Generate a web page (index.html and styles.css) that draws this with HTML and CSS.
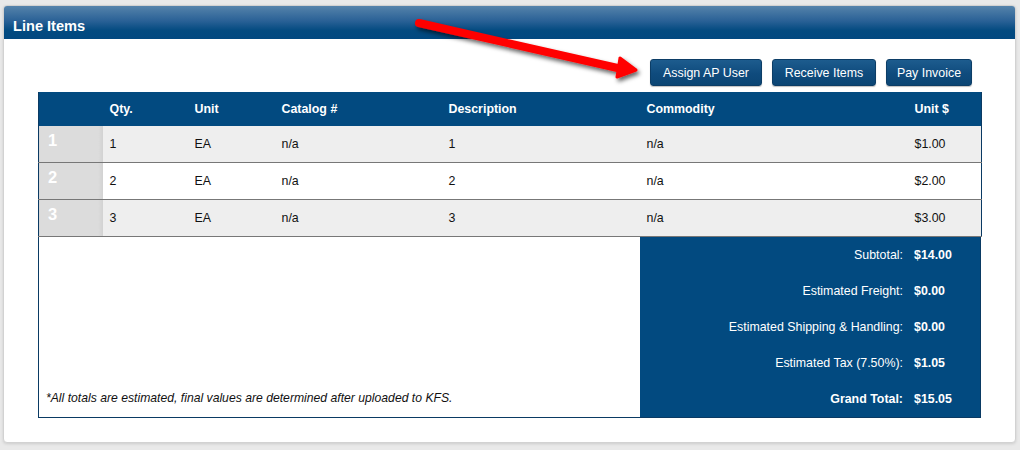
FILE: index.html
```html
<!DOCTYPE html>
<html>
<head>
<meta charset="utf-8">
<link rel="stylesheet" href="styles.css">
</head>
<body>
<div class="panel">
  <div class="panel-head">Line Items</div>
  <div class="panel-body">
    <div class="actions">
      <button class="btn">Assign AP User</button>
      <button class="btn">Receive Items</button>
      <button class="btn">Pay Invoice</button>
    </div>
    <div class="grid-wrap">
      <table class="items">
        <colgroup>
          <col class="c-num"><col class="c-qty"><col class="c-unit"><col class="c-cat"><col class="c-desc"><col class="c-com"><col class="c-price">
        </colgroup>
        <thead>
          <tr><th></th><th>Qty.</th><th>Unit</th><th>Catalog #</th><th>Description</th><th>Commodity</th><th>Unit $</th></tr>
        </thead>
        <tbody>
          <tr class="odd"><td class="num">1</td><td>1</td><td>EA</td><td>n/a</td><td>1</td><td>n/a</td><td>$1.00</td></tr>
          <tr class="even"><td class="num">2</td><td>2</td><td>EA</td><td>n/a</td><td>2</td><td>n/a</td><td>$2.00</td></tr>
          <tr class="odd"><td class="num">3</td><td>3</td><td>EA</td><td>n/a</td><td>3</td><td>n/a</td><td>$3.00</td></tr>
        </tbody>
      </table>
      <div class="totals">
        <div class="note">*All totals are estimated, final values are determined after uploaded to KFS.</div>
        <div class="sums">
          <div class="lbl">Subtotal:</div><div class="val">$14.00</div>
          <div class="lbl">Estimated Freight:</div><div class="val">$0.00</div>
          <div class="lbl">Estimated Shipping &amp; Handling:</div><div class="val">$0.00</div>
          <div class="lbl">Estimated Tax (7.50%):</div><div class="val">$1.05</div>
          <div class="lbl grand">Grand Total:</div><div class="val">$15.05</div>
        </div>
      </div>
    </div>
  </div>
</div>
<svg class="arrow" width="260" height="80" viewBox="0 0 260 80">
  <defs>
    <filter id="sh" x="-20%" y="-50%" width="140%" height="200%">
      <feDropShadow dx="2" dy="3" stdDeviation="2" flood-color="#000" flood-opacity="0.6"/>
    </filter>
  </defs>
  <g filter="url(#sh)">
    <path d="M3 8 L206 54" stroke="#ff0000" stroke-width="8" stroke-linecap="round" fill="none"/>
    <path d="M220 55 L204 43 L201 62 Z" fill="#ff0000" stroke="#ff0000" stroke-width="3" stroke-linejoin="round"/>
  </g>
</svg>
</body>
</html>
```

FILE: styles.css
```css
html, body {
  margin: 0;
  padding: 0;
}
body {
  background: #e9e9e9;
  font-family: "Liberation Sans", Arial, sans-serif;
  font-size: 12.4px;
  color: #111;
  width: 1020px;
  height: 450px;
  position: relative;
  overflow: hidden;
}
.panel {
  margin: 5px 3px 0 3px;
  width: 1013px;
  height: 438px;
  box-sizing: border-box;
  background: #fff;
  border: 1px solid #d2d2d2;
  border-radius: 4px;
  box-shadow: 0 1px 3px rgba(0,0,0,0.12);
  overflow: hidden;
}
.panel-head {
  height: 33px;
  box-sizing: border-box;
  padding: 12px 0 0 9px;
  background: linear-gradient(#5583ab 0%, #2a6196 45%, #024a80 75%, #014880 100%);
  color: #fff;
  font-weight: bold;
  font-size: 14.6px;
  line-height: 16px;
}
.panel-body {
  padding: 20px 34px 0 34px;
}
.actions {
  display: flex;
  justify-content: flex-end;
  gap: 10px;
  padding-right: 9px;
  margin-bottom: 6px;
}
.btn {
  height: 27px;
  padding: 0;
  border: 1px solid #0c3d66;
  border-radius: 3px;
  background: linear-gradient(#1d5c8e, #0f4b7d 55%, #0b4574);
  color: #fff;
  font-family: "Liberation Sans", Arial, sans-serif;
  font-size: 12.4px;
  white-space: nowrap;
  box-shadow: 0 1px 1px rgba(0,0,0,0.25);
}
.btn:nth-child(1) { width: 112px; }
.btn:nth-child(2) { width: 104px; }
.btn:nth-child(3) { width: 86px; }
.grid-wrap {
  width: 943px;
}
.items {
  width: 943px;
  border-collapse: collapse;
  table-layout: fixed;
  border-left: 1px solid #0a3a63;
  border-right: 1px solid #0a3a63;
}
.c-num { width: 64px; }
.c-qty { width: 85px; }
.c-unit { width: 87px; }
.c-cat { width: 167px; }
.c-desc { width: 198px; }
.c-com { width: 268px; }
.c-price { width: 74px; }
.items th {
  background: #024a80;
  color: #fff;
  font-weight: bold;
  text-align: left;
  height: 34px;
  padding: 0 0 0 7px;
  font-size: 12.4px;
}
.items td {
  height: 36px;
  padding: 0 0 0 7px;
  border-bottom: 1px solid #777;
  font-size: 12.4px;
  color: #111;
}
.items tr.odd td { background: #eeeeee; }
.items tr.even td { background: #fff; }
.items td.num {
  background: linear-gradient(90deg, #dcdcdc 0%, #dcdcdc 92%, #d0d0d0 100%) !important;
  color: #fff;
  font-weight: bold;
  font-size: 16.5px;
  line-height: 18px;
  vertical-align: top;
  padding: 5px 0 0 9px;
  height: 31px;
}
.totals {
  display: grid;
  grid-template-columns: 602px 341px;
  height: 181px;
  box-sizing: border-box;
}
.note {
  border-left: 1px solid #0a3a63;
  border-bottom: 1px solid #0a3a63;
  font-style: italic;
  font-size: 12.2px;
  display: flex;
  align-items: flex-end;
  padding: 0 0 12px 7px;
  color: #111;
}
.sums {
  background: #024a80;
  border-right: 1px solid #0a3a63;
  border-bottom: 1px solid #0a3a63;
  display: grid;
  grid-template-columns: 1fr 66px;
  grid-auto-rows: 36px;
  color: #fff;
}
.lbl {
  text-align: right;
  padding-right: 11px;
  align-self: center;
}
.lbl.grand { font-weight: bold; }
.val {
  font-weight: bold;
  align-self: center;
}
.arrow {
  position: absolute;
  left: 416px;
  top: 15px;
  overflow: visible;
}
```
